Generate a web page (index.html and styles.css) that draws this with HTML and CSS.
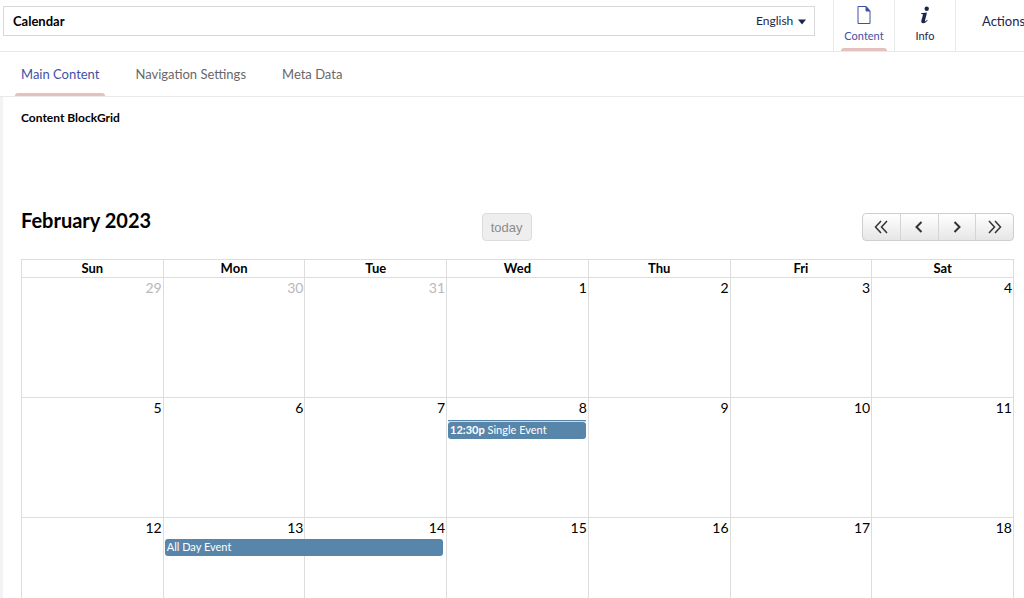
FILE: index.html
```html
<!DOCTYPE html>
<html lang="en">
<head>
    <meta charset="UTF-8">
    <meta name="viewport" content="width=device-width, initial-scale=1.0">
    <title>Calendar</title>
    <link rel="stylesheet" href="styles.css">
</head>
<body>

    <header class="editor-header">
        <div class="name-box">
            <input class="name-input" type="text" value="Calendar" aria-label="Name">
            <div class="language">
                <select class="language-select" aria-label="Language">
                    <option>English</option>
                </select>
                <svg class="caret" viewBox="0 0 8 6" width="8" height="6"><path d="M0 0.5h8L4 5.5z" fill="#1b264f"/></svg>
            </div>
        </div>
        <nav class="apps">
            <button class="app active" type="button">
                <svg width="14" height="20" viewBox="0 0 14 20" fill="none" stroke="currentColor"><path d="M1 1.5h8l4 4.500v12.500H1z"/><path d="M9 1.500v4.500h4z" fill="currentColor"/></svg>
                <span>Content</span>
            </button>
            <button class="app" type="button">
                <svg width="14" height="20" viewBox="0 0 14 20" fill="currentColor"><circle cx="8.700" cy="3.700" r="2.200"/><path d="M3 8.300l6-.8-2 8c-.2.900.3 1 .9.500l1.200-1.300.6.500c-1.500 2-3 3-4.500 3-1.700 0-2.200-1-1.800-2.700l1.500-5.500c.2-.8-.2-1-1.900-1z"/></svg>
                <span>Info</span>
            </button>
        </nav>
        <button class="actions" type="button">Actions</button>
    </header>

    <nav class="tabs">
        <button class="tab active" type="button">Main Content</button>
        <button class="tab" type="button">Navigation Settings</button>
        <button class="tab" type="button">Meta Data</button>
    </nav>

    <main class="content">
        <h2 class="property-label">Content BlockGrid</h2>

        <div class="toolbar">
            <h1 class="month">February 2023</h1>
            <button class="today" type="button" disabled>today</button>
            <div class="pager">
                <button type="button" aria-label="Previous year"><svg width="14" height="14" viewBox="0 0 14 14"><path d="M7 1L1.500 7 7 13M13 1L7.500 7l5.500 6"/></svg></button>
                <button type="button" aria-label="Previous month"><svg width="14" height="14" viewBox="0 0 14 14"><path class="bold" d="M9.500 2L4.500 7l5 5"/></svg></button>
                <button type="button" aria-label="Next month"><svg width="14" height="14" viewBox="0 0 14 14"><path class="bold" d="M4.500 2l5 5-5 5"/></svg></button>
                <button type="button" aria-label="Next year"><svg width="14" height="14" viewBox="0 0 14 14"><path d="M1 1l5.500 6L1 13M7 1l5.500 6L7 13"/></svg></button>
            </div>
        </div>

        <table class="calendar">
            <thead>
                <tr><th>Sun</th><th>Mon</th><th>Tue</th><th>Wed</th><th>Thu</th><th>Fri</th><th>Sat</th></tr>
            </thead>
            <tbody>
                <tr>
                    <td class="other">29</td>
                    <td class="other">30</td>
                    <td class="other">31</td>
                    <td>1</td>
                    <td>2</td>
                    <td>3</td>
                    <td>4</td>
                </tr>
                <tr>
                    <td>5</td>
                    <td>6</td>
                    <td>7</td>
                    <td>8
                        <a class="event timed" href="#"><b>12:30p</b> Single Event</a>
                    </td>
                    <td>9</td>
                    <td>10</td>
                    <td>11</td>
                </tr>
                <tr>
                    <td>12</td>
                    <td>13
                        <a class="event two-days" href="#">All Day Event</a>
                    </td>
                    <td>14</td>
                    <td>15</td>
                    <td>16</td>
                    <td>17</td>
                    <td>18</td>
                </tr>
            </tbody>
        </table>
    </main>

</body>
</html>
```
FILE: styles.css
```css
* {
    box-sizing: border-box;
}
body {
    margin: 0;
    height: 100vh;
    overflow: hidden;
    background-color: white;
    color: black;
    font-family: Lato, sans-serif;
    font-size: 13px;
}
button, input, select {
    font-family: inherit;
    border: 0;
    margin: 0;
    padding: 0;
    background: none;
}

/* Top bar */
.editor-header {
    display: flex;
    height: 52px;
    border-bottom: 1px solid #e9e9eb;
}
.name-box {
    display: flex;
    flex: 1;
    height: 30px;
    margin: 6px 18px 0 3px;
    border: 1px solid #d8d7d9;
}
.name-input {
    flex: 1;
    min-width: 0;
    padding: 0 9px;
    font-size: 13px;
    font-weight: bold;
    color: black;
}
.language {
    position: relative;
    display: flex;
}
.language-select {
    appearance: none;
    padding-right: 20px;
    padding-bottom: 2px;
    font-size: 12px;
    color: #1b264f;
}
.caret {
    position: absolute;
    right: 8px;
    top: 12px;
    pointer-events: none;
}
.apps {
    display: flex;
    border-left: 1px solid #e9e9eb;
}
.app {
    position: relative;
    display: flex;
    flex-direction: column;
    align-items: center;
    gap: 4px;
    width: 61px;
    padding-top: 5px;
    border-right: 1px solid #e9e9eb;
    font-size: 11px;
    line-height: 14px;
    color: #1b264f;
}
.app.active,
.tab.active {
    color: #3f51a5;
}
.app.active::after,
.tab.active::after {
    content: "";
    position: absolute;
    left: 7px;
    right: 7px;
    bottom: 0;
    height: 3px;
    border-radius: 3px 3px 0 0;
    background-color: #e5c1bd;
}
.actions {
    width: 68px;
    padding-left: 26px;
    padding-bottom: 9px;
    overflow: hidden;
    text-align: left;
    white-space: nowrap;
    font-size: 13px;
    color: #1b264f;
}

/* Tabs */
.tabs {
    display: flex;
    gap: 24px;
    height: 45px;
    padding-left: 15px;
    border-bottom: 1px solid #e9e9eb;
}
.tab {
    position: relative;
    padding: 0 6px;
    font-size: 13px;
    color: #68676b;
}
.tab.active::after {
    left: 0;
    right: 0;
}

/* Calendar */
.content {
    padding: 13px 10px 0 18px;
    border-left: 3px solid #f3f3f5;
}
.property-label {
    margin: 0;
    font-size: 12px;
    line-height: 16px;
    font-weight: bold;
}
.toolbar {
    display: flex;
    justify-content: space-between;
    height: 28px;
    margin: 87px 0 18px;
}
.month {
    margin: 0;
    margin-top: -5px;
    font-size: 20px;
    line-height: 24px;
    font-weight: bold;
}
.today {
    width: 50px;
    height: 28px;
    border: 1px solid #dcdcdc;
    border-radius: 4px;
    background-color: #eeeeee;
    font-family: "Liberation Sans", sans-serif;
    font-size: 13px;
    color: #8c8c8c;
}
.pager {
    display: flex;
    width: 152px;
    height: 28px;
    border: 1px solid #cfcfcf;
    border-radius: 4px;
    background: linear-gradient(#ffffff, #e6e6e6);
}
.pager button {
    display: flex;
    flex: 1;
    align-items: center;
    justify-content: center;
}
.pager button + button {
    border-left: 1px solid #d4d4d4;
}
.pager path {
    fill: none;
    stroke: #333333;
    stroke-width: 1.5;
}
.pager .bold {
    stroke-width: 2;
}
.calendar {
    width: 100%;
    table-layout: fixed;
    border-collapse: collapse;
}
.calendar th,
.calendar td {
    border: 1px solid #dddddd;
}
.calendar th {
    height: 18px;
    padding: 0;
    font-size: 13px;
    line-height: 17px;
}
.calendar td {
    position: relative;
    height: 120px;
    padding: 1px;
    vertical-align: top;
    text-align: right;
    font-size: 14px;
    line-height: 18px;
}
.calendar .other {
    color: #b8b8b8;
}
.event {
    position: absolute;
    top: 21px;
    left: 1px;
    width: calc(100% - 3px);
    height: 17px;
    padding-left: 2px;
    border-radius: 3px;
    background-color: #5886aa;
    color: white;
    text-align: left;
    text-decoration: none;
    white-space: nowrap;
    font-size: 11px;
    line-height: 15px;
}
.event.two-days {
    z-index: 1;
    width: calc(200% - 3px);
}
.event.timed {
    top: 24px;
}
.event.timed::before {
    content: "";
    position: absolute;
    left: 0;
    right: 0;
    top: -2px;
    height: 1px;
    background-color: #5886aa;
    box-shadow: 0 1px #c5dcee;
}
```
